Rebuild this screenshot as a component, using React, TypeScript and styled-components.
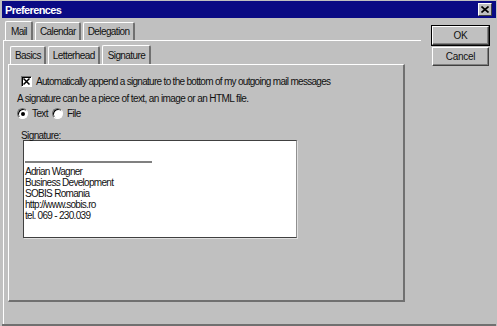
import React from 'react';
import styled, { createGlobalStyle } from 'styled-components';

const GlobalStyle = createGlobalStyle`
  html, body {
    margin: 0;
    padding: 0;
    background: #c0c0c0;
  }
  body {
    font-family: "Liberation Sans", Arial, sans-serif;
    font-size: 10px;
    letter-spacing: -0.6px;
    color: #111;
  }
`;

const Window = styled.div`
  width: 497px;
  height: 326px;
  box-sizing: border-box;
  background: #c0c0c0;
  padding: 1px 1px 0 2px;
  display: flex;
  flex-direction: column;
  overflow: hidden;
`;

const TitleBar = styled.div`
  height: 17px;
  background: #0a0a84;
  display: flex;
  align-items: center;
  justify-content: space-between;
  padding: 0 4px 0 3px;
  flex-shrink: 0;
`;

const Title = styled.span`
  color: #fff;
  font-weight: bold;
  font-size: 11px;
  letter-spacing: -0.6px;
`;

const CloseButton = styled.div`
  width: 12px;
  height: 11px;
  background: #c0c0c0;
  border-top: 1px solid #fff;
  border-left: 1px solid #fff;
  border-right: 1px solid #404040;
  border-bottom: 1px solid #404040;
  display: flex;
  align-items: center;
  justify-content: center;
`;

const Body = styled.div`
  flex: 1;
  display: flex;
  padding-top: 3px;
  border-bottom: 2px solid #707070;
`;

const OuterTabs = styled.div`
  width: 418px;
  margin-left: 1px;
  display: flex;
  flex-direction: column;
`;

const TabRow = styled.div<{ $indent: number }>`
  display: flex;
  padding-left: ${p => p.$indent}px;
  height: 19px;
  align-items: flex-end;
`;

const Tab = styled.div<{ $active?: boolean }>`
  height: ${p => (p.$active ? 19 : 18)}px;
  box-sizing: border-box;
  padding: ${p => (p.$active ? '0 4px 0 5px' : '0 3px 0 4px')};
  margin-right: 2px;
  display: flex;
  align-items: center;
  border-top: 1px solid #fff;
  border-left: 1px solid #fff;
  border-right: 2px solid #707070;
  border-radius: 2px 2px 0 0;
  white-space: nowrap;
`;

const OuterPanel = styled.div`
  flex: 1;
  border-top: 1px solid #fff;
  border-left: 1px solid #fff;
  padding: 4px 0 0 4px;
  display: flex;
  flex-direction: column;
`;

const InnerPanel = styled.div`
  width: 397px;
  height: 238px;
  box-sizing: border-box;
  border-top: 1px solid #fff;
  border-left: 1px solid #fff;
  border-right: 2px solid #707070;
  border-bottom: 2px solid #707070;
  padding: 11px 0 0 8px;
`;

const CheckRow = styled.label`
  display: flex;
  align-items: center;
  gap: 4px;
  margin-left: 4px;
  height: 11px;
  white-space: nowrap;
  letter-spacing: -0.7px;
`;

const CheckBox = styled.span`
  width: 11px;
  height: 11px;
  flex-shrink: 0;
  box-sizing: border-box;
  background: #fff;
  border-top: 1px solid #707070;
  border-left: 1px solid #707070;
  border-right: 1px solid #fff;
  border-bottom: 1px solid #fff;
  box-shadow: inset 1px 1px 0 #000;
  display: flex;
  align-items: center;
  justify-content: center;
`;

const Hint = styled.div`
  margin-top: 5px;
  height: 13px;
  line-height: 13px;
`;

const RadioRow = styled.div`
  display: flex;
  align-items: center;
  height: 11px;
  margin-top: 3px;
`;

const RadioOption = styled.label`
  display: flex;
  align-items: center;
  gap: 4px;
  margin-right: 4px;
`;

const Radio = styled.span<{ $on?: boolean }>`
  width: 11px;
  height: 11px;
  box-sizing: border-box;
  border-radius: 50%;
  background: #fff;
  border: 1px solid;
  border-color: #707070 #fff #fff #707070;
  box-shadow: inset 1px 1px 0 #000;
  display: flex;
  align-items: center;
  justify-content: center;

  &::after {
    content: '';
    width: 4px;
    height: 4px;
    border-radius: 50%;
    background: ${p => (p.$on ? '#000' : 'transparent')};
  }
`;

const FieldLabel = styled.div`
  margin: 13px 0 0 4px;
  height: 8px;
  line-height: 8px;
`;

const SignatureBox = styled.div`
  width: 274px;
  height: 98px;
  margin: 0 0 0 6px;
  box-sizing: border-box;
  background: #fff;
  border: 1px solid #404040;
  border-right-color: #909090;
  border-bottom-color: #404040;
  box-shadow: 1px 1px 0 #e0e0e0;
  padding: 20px 0 0 1px;
`;

const Separator = styled.div`
  width: 127px;
  height: 2px;
  background: #808080;
`;

const SignatureText = styled.div`
  margin-top: 3px;
  line-height: 11px;
  letter-spacing: -0.7px;
`;

const ButtonColumn = styled.div`
  margin-left: auto;
  margin-right: 7px;
  padding-top: 5px;
  display: flex;
  flex-direction: column;
  gap: 2px;
`;

const Button = styled.div<{ $default?: boolean }>`
  width: 57px;
  height: 19px;
  box-sizing: border-box;
  display: flex;
  align-items: center;
  justify-content: center;
  letter-spacing: -0.3px;
  background: #c0c0c0;
  border-top: 1px solid #fff;
  border-left: 1px solid #fff;
  border-right: 1px solid #404040;
  border-bottom: 1px solid #404040;
  box-shadow: ${p =>
    p.$default ? '0 0 0 1px #000, inset -1px -1px 0 #808080' : 'inset -1px -1px 0 #808080'};
`;

const lines = [
  'Adrian Wagner',
  'Business Development',
  'SOBIS Romania',
  'http://www.sobis.ro',
  'tel. 069 - 230.039',
];

export default function App() {
  return (
    <>
      <GlobalStyle />
      <Window>
        <TitleBar>
          <Title>Preferences</Title>
          <CloseButton>
            <svg width="8" height="7" viewBox="0 0 8 7">
              <path d="M0.5 0.5 L7.5 6.5 M7.5 0.5 L0.5 6.5" stroke="#000" strokeWidth="1.6" />
            </svg>
          </CloseButton>
        </TitleBar>
        <Body>
          <OuterTabs>
            <TabRow $indent={2}>
              <Tab $active>Mail</Tab>
              <Tab>Calendar</Tab>
              <Tab>Delegation</Tab>
            </TabRow>
            <OuterPanel>
              <TabRow $indent={2}>
                <Tab>Basics</Tab>
                <Tab>Letterhead</Tab>
                <Tab $active>Signature</Tab>
              </TabRow>
              <InnerPanel>
                <CheckRow>
                  <CheckBox>
                    <svg width="7" height="7" viewBox="0 0 7 7">
                      <path d="M0.5 0.5 L6.5 6.5 M6.5 0.5 L0.5 6.5" stroke="#000" strokeWidth="1.5" />
                    </svg>
                  </CheckBox>
                  Automatically append a signature to the bottom of my outgoing mail messages
                </CheckRow>
                <Hint>A signature can be a piece of text, an image or an HTML file.</Hint>
                <RadioRow>
                  <RadioOption>
                    <Radio $on />
                    Text
                  </RadioOption>
                  <RadioOption>
                    <Radio />
                    File
                  </RadioOption>
                </RadioRow>
                <FieldLabel>Signature:</FieldLabel>
                <SignatureBox>
                  <Separator />
                  <SignatureText>
                    {lines.map(l => (
                      <div key={l}>{l}</div>
                    ))}
                  </SignatureText>
                </SignatureBox>
              </InnerPanel>
            </OuterPanel>
          </OuterTabs>
          <ButtonColumn>
            <Button $default>OK</Button>
            <Button>Cancel</Button>
          </ButtonColumn>
        </Body>
      </Window>
    </>
  );
}
